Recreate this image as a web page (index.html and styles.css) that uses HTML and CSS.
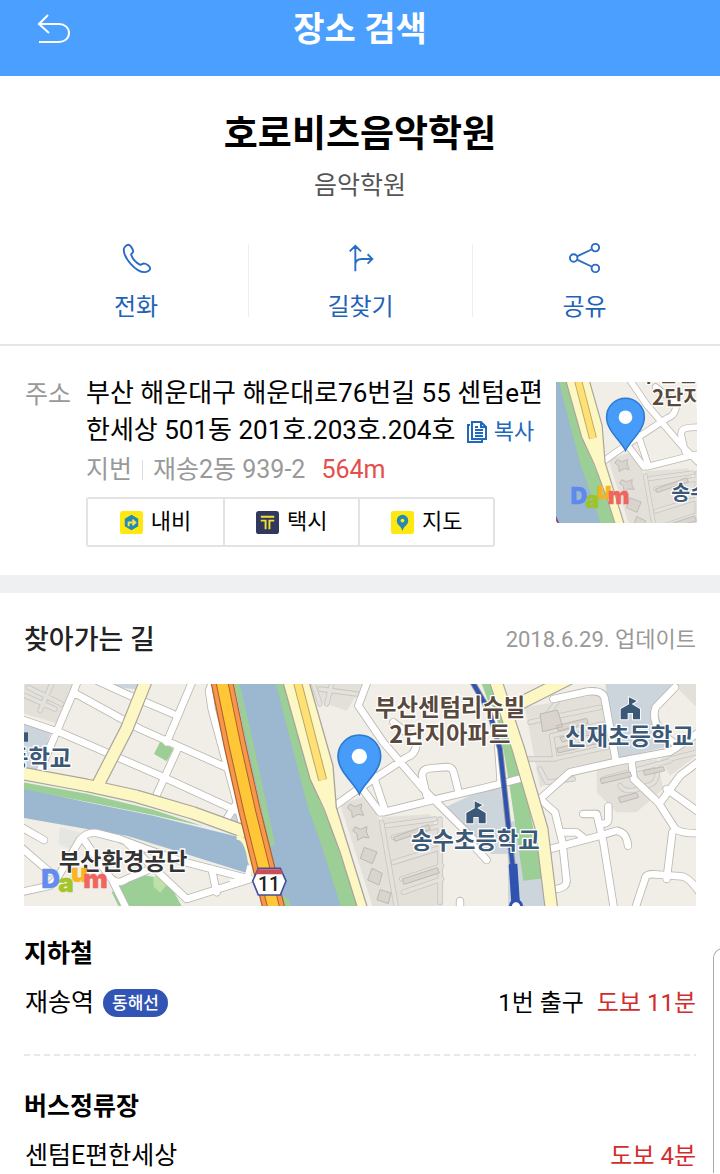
FILE: index.html
```html
<!DOCTYPE html>
<html lang="ko">
<head>
<meta charset="utf-8">
<meta name="viewport" content="width=device-width, initial-scale=1">
<title>장소 검색</title>
<link rel="stylesheet" href="styles.css">
</head>
<body>
<header class="topbar">
  <button class="back" type="button" aria-label="뒤로">
    <svg width="36" height="34" viewBox="0 0 36 34"><path d="M12 3 3 12l10 9M3 12h20c6 0 10 4 10 9s-4 9-10 9H3"/></svg>
  </button>
  <h1 class="topbar-title">장소 검색</h1>
</header>
<main>
  <section class="summary">
    <h2 class="place">호로비츠음악학원</h2>
    <p class="category">음악학원</p>
    <nav class="actions">
      <a class="action" href="#phone">
        <svg class="action-icon" viewBox="0 0 36 36"><path d="M5 9c0-2 3-5 5-5 2 0 5 5 5 7s-3 2-2 4c2 5 5 8 9 10 2 1 3-2 5-1 2 0 6 3 6 5s-3 4-6 4C18 33 5 18 5 9z"/></svg>
        <span>전화</span>
      </a>
      <a class="action" href="#route">
        <svg class="action-icon" viewBox="0 0 36 36"><path d="M12 32V5M6 11l6-6 6 6M12 25c0-4 3-6 7-6h11M25 14l5 5-5 5"/></svg>
        <span>길찾기</span>
      </a>
      <a class="action" href="#share">
        <svg class="action-icon" viewBox="0 0 36 36"><circle cx="6" cy="18" r="4"/><circle cx="29" cy="7" r="4"/><circle cx="29" cy="29" r="4"/><path d="M10 16 25 9M10 20l15 7"/></svg>
        <span>공유</span>
      </a>
    </nav>
  </section>

  <section class="address">
    <h3 class="address-label">주소</h3>
    <div class="address-body">
      <p class="road-name">부산 해운대구 해운대로76번길 55 센텀e편한세상 501동 201호.203호.204호
        <button class="copy" type="button"><svg width="22" height="24" viewBox="0 0 22 24"><path d="M6 2h9l5 5v12H6zM15 2v5h5M9 10h8M9 13h8M9 16h8M9 7h3M4 5H2v17h14v-2"/></svg>복사</button></p>
      <p class="lot"><span>지번</span><span class="bar"></span><span>재송2동 939-2</span><span class="distance">564m</span></p>
      <div class="apps">
        <a class="app" href="#navi"><svg class="app-icon" viewBox="0 0 24 24"><rect width="24" height="24" rx="3" fill="#ffe710"/><path d="M12 4l7 4v8l-7 4-7-4V8z" fill="#2589b5"/><path d="M9 16v-4h6M13 9l3 3-3 3" fill="none" stroke="#f3e54b" stroke-width="2"/></svg>내비</a>
        <a class="app" href="#taxi"><svg class="app-icon" viewBox="0 0 24 24"><rect width="24" height="24" rx="3" fill="#30385d"/><path d="M5 6h14M5 10h5v9M19 10h-5v9" fill="none" stroke="#f7df2e" stroke-width="2"/></svg>택시</a>
        <a class="app" href="#map"><svg class="app-icon" viewBox="0 0 24 24"><rect width="24" height="24" rx="3" fill="#ffe710"/><path d="M12 21c-1-5-6-6-6-11a6 6 0 0 1 12 0c0 5-5 6-6 11z" fill="#2589b5"/><circle cx="12" cy="10" r="2" fill="#ffe710"/></svg>지도</a>
      </div>
    </div>
    <a class="thumb" href="#map" aria-label="지도 보기">
      <svg viewBox="783 113 477 477">
        <use href="#city"/>
        <use href="#daum" x="768" y="-100"/>
      </svg>
    </a>
  </section>

  <section class="directions" id="map">
    <div class="directions-head">
      <h3 class="directions-title">찾아가는 길</h3>
      <span class="updated">2018.6.29. 업데이트</span>
    </div>
    <svg class="map" viewBox="12 15 2016 666" role="img" aria-label="찾아가는 길 지도">
      <defs>
        <g id="white-roads">
          <path d="M0 120 120 160 420 290 650 395M60 275 160 40 175 0M160 40 360 150 625 268M220 0 330 50 460 105M520 0 440 190M475 205 405 358M645 380l-28 45M0 502l90 78M0 442l72 41M0 640l90-20 20-20 70-118q20-24 50-20l70 18 80 30 100 35 210 55M190 480l70 100q25 45 60 20l60-25M320 490l180 170 190-60M575 570l15 70M280 610l40 80M575 15l-8 20 8 55 65 240 36 140"/>
          <path d="M1045 0l-30 80 75 110 120 140 150 150M945 380l70-50 145-95q30-10 30-50l-70-55M1020 320l60 80M1060 290l35 105M1220 350l-14-60q0-20 24-22l50-4q18 0 22 20l14 55M1090 400l140-35 170-40 105-27M1410 90l22 70 10 145M1350 488l50 55M1320 690v-24"/>
          <path d="M1600 60l100-22q48-6 54 20l34 190M1560 360l90-80 140-32 160-30 90-60M1965 25l-58 60q-20 60 60 110M1835 250l6 50 75 72 50 78q20 15 75 12M1925 365l55-75 60-45M1940 330l100 72M1957 460l-17 140M1845 690l30-90q0-16 30-14l80 6q25 2 65 65M1560 360l45 40 22 90 12 110q5 25-30 30M1590 510l150-40 50-15q30 5 34 45M1630 460h40l25 20M1690 405h40l20 85 32 200M1740 435q25 0 25-15v-38"/>
        </g>
        <g id="lanes">
          <path d="M15 50l90 40M25 25l100 50M95 15 60 95M880 15l20 60M935 15l-15 60M900 30l110 15M1085 430l45 260M1100 440l145-20M1120 475l140-35M1120 550l145-45M1145 600l120-40M1150 640l115-40M1260 420v250M1530 130l40-10 40-50M1525 240h80l-10-70 150-35M1600 240l180-40M1620 110l120-25M1560 270l20 40 80-10M1750 300l200-55M1800 320q20 30 80 0M1910 255q10 60-30 65M1950 240l80-20"/>
        </g>
        <g id="pin"><path d="M1018 345c-14-33-64-67-64-113a64 64 0 0 1 128 0c0 46-50 80-64 113z" fill="#469cf8" stroke="#2c7bd0" stroke-width="5"/><circle cx="1018" cy="232" r="23" fill="#fff"/></g>
        <g id="school"><path d="M-29 33V2L-4-12V-33L19-22 4-13 29 2V33H8V14H-8V33z" fill="#3b5876" stroke="#fff" stroke-width="5" paint-order="stroke"/></g>
        <g id="daum" class="daum">
          <text x="64" y="627" fill="#5b87ef" stroke="#5b87ef">D</text>
          <text x="115" y="639" fill="#9fc41c" stroke="#9fc41c">a</text>
          <text x="153" y="608" fill="#fbb216" stroke="#fbb216">u</text>
          <text x="190" y="627" fill="#f05f57" stroke="#f05f57">m</text>
        </g>
        <path id="avenue" d="M0 282l200 37 150 33 170 50 165 60M380 0l-60 150-85 165M1425 0l70 210 70 240 30 245M1470 88 1645 0"/>
        <path id="highway" d="M604 0l41 200 45 200 72 290"/>
        <g id="city">
          <rect x="0" y="0" width="2060" height="700" fill="#f1eee8"/>
          <g fill="#e3e0da">
            <path d="M0 0h165l-50 135L0 100zM890 0h150l-60 95-90-30zM960 375l80-25 50 90 45 250h-75zM1085 415l145-10 40 90v195h-145zM1515 85l225-40 50 200-140 40-90 40zM1730 270l180-30 20 90-80 70h-60l-60-60zM1920 240l110-80v70l-80 60zM1960 15h80v80z"/>
          </g>
          <g fill="#ccd4dc">
            <path d="M0 115l95 35-40 125H0zM245 0h120l-10 32-80-10zM1755 0h210l-60 90 50 110-175 40zM1275 385l75-35 90-25 35 200h-60l-70-40zM1462 430l55-10 48 180 10 90h-110zM610 430l40-40 25 60z"/>
          </g>
          <path d="M640 0h135l90 300 50 140 65 250H790L680 200z" fill="#9cb8d0"/>
          <path d="M0 325l200 45 200 40 280 70 30 90-20 15-240-75-130-40-120-20-200-35z" fill="#9cb8d0"/>
          <g fill="#9bcf96">
            <path d="M764 0h26l90 320 55 130 80 240h-50L905 500l-40-110zM640 0h15l40 170 70 325-15 10zM0 308l200 36 200 48 150 50-150-34-200-40-200-40zM790 650l20 15v25h-20z"/>
            <path d="M402 225l18-36 40 20-20 38zM275 640l75-55 90 15 50 90H300zM1380 0h40l70 200 80 398-60 7-40-275-20-120-30-100z"/>
          </g>
          <path d="M400 595l25-12 18 30-22 28-20-18z" fill="#bfe0a8"/>
          <path d="M120 445l60 15-30 50-35-15z" fill="#e5e6e2"/>
          <g class="road">
            <use href="#lanes" stroke="#c9c6c0" stroke-width="16"/><use href="#lanes" stroke="#e4e2dd" stroke-width="11"/>
            <use href="#white-roads" stroke="#bbb7b1" stroke-width="25"/><use href="#white-roads" stroke="#fff" stroke-width="20"/>
          </g>
          <g fill="#d9d5ce" stroke="#bdb9b2" stroke-width="3">
            <path id="block" d="M990 375l15 8 20-8-2 16 8 18-17-3-17 10-2-19-13-10z"/>
            <use href="#block" x="16" y="68"/>
            <path d="M1033 505l38 14-14 35-36-16zM1056 568l31 15-10 35-34-15zM1080 632l33 10-8 32-34-12zM1120 475l105-38 6 14-106 36zM1147 600l105-34 6 16-106 34zM1560 105l52-12 16 50-60 15zM1610 140l90-22 5 14-90 24zM1620 175l100-25 5 14-98 25zM1610 208l115-28 5 14-115 28zM1740 300l90-22 5 14-90 22zM1795 355l55-14 6 14-55 16zM1870 275l60-12 4 12-60 14z"/>
          </g>
          <g class="road">
            <use href="#avenue" stroke="#aaa69d" stroke-width="41"/>
            <use href="#avenue" stroke="#fdf7c3" stroke-width="34"/>
          </g>
          <path d="M786 0h79l74 260 10 125 96 310h-30l-55-175-48-130-42-90z" fill="#fdf7c3" stroke="#aaa69d" stroke-width="4"/>
          <path d="M830 0l78 303" fill="none" stroke="#b9a869" stroke-width="27"/>
          <path d="M830 0l78 303" fill="none" stroke="#fee074" stroke-width="21"/>
          <path d="M650 475q30 0 40 70l20 60" fill="none" stroke="#fdf7c3" stroke-width="14"/>
          <path d="M630 610l65-15M690 560l-12 50" fill="none" stroke="#fff" stroke-width="16"/>
          <g class="road">
            <use href="#highway" stroke="#a9622f" stroke-width="68"/>
            <use href="#highway" stroke="#f8964a" stroke-width="61"/>
            <use href="#highway" stroke="#a9622f" stroke-width="38"/>
            <use href="#highway" stroke="#ffc638" stroke-width="32"/>
          </g>
          <g fill="none" stroke="#3153b0">
            <path d="M1352 0l55 95 33 115 38 350" stroke="#8e9299" stroke-width="18"/>
            <path d="M1352 0l55 95 33 115 38 350" stroke-width="12"/>
            <path d="M1479 555l8 120" stroke-width="26"/>
            <circle cx="1488" cy="682" r="17" fill="#fff" stroke-width="9"/>
          </g>
          <use href="#school" x="1831" y="88"/><use href="#school" x="1368" y="400"/>
          <path d="M0 160h24v28H0z" fill="#3b5876"/>
          <g class="label">
            <text x="1065" y="112" fill="#59493c">부산센텀리슈빌</text>
            <text x="1108" y="191" fill="#59493c">2단지아파트</text>
            <text x="1635" y="198" fill="#3b5876">신재초등학교</text>
            <text x="1173" y="511" fill="#3b5876">송수초등학교</text>
            <text x="154" y="265" fill="#3b5876" text-anchor="end">초등학교</text>
            <text x="116" y="572" fill="#333">부산환경공단</text>
          </g>
          <path d="M715 568h66l17 38-17 42h-66l-17-42z" fill="#fff" stroke="#454f9e" stroke-width="5"/>
          <path d="M713 571h70l6 15h-82z" fill="#cc4d55"/>
          <text class="route" x="747" y="636">11</text>
          <use href="#pin"/>
        </g>
      </defs>
      <use href="#city"/><use href="#daum"/>
    </svg>

    <div class="stop">
      <h4 class="stop-type">지하철</h4>
      <div class="stop-row">
        <span class="stop-name">재송역</span><span class="line">동해선</span>
        <span class="stop-exit">1번 출구</span><span class="walk">도보 11분</span>
      </div>
    </div>
    <hr class="dash">
    <div class="stop">
      <h4 class="stop-type">버스정류장</h4>
      <div class="stop-row">
        <span class="stop-name">센텀E편한세상</span>
        <span class="walk walk-end">도보 4분</span>
      </div>
    </div>
  </section>
</main>
<div class="edge-panel"></div>
</body>
</html>
```
FILE: styles.css
```css
* { box-sizing: border-box; margin: 0; padding: 0; }
html { overflow-x: hidden; }
body {
  position: relative;
  background: #fff;
  color: #000;
  font-family: Roboto, "Noto Sans CJK KR", sans-serif;
  font-size: 25px;
  line-height: 36px;
}
a { color: inherit; text-decoration: none; }
button { border: 0; background: none; font: inherit; color: inherit; cursor: pointer; }
svg { display: block; }

.topbar {
  display: grid;
  grid-template-columns: 72px 1fr 72px;
  align-items: center;
  padding-bottom: 18px;
  background: #4a9fff;
  color: #fff;
}
.topbar-title { text-align: center; font-size: 34px; line-height: 58px; font-weight: 700; }
.back { justify-self: end; }
.back svg { fill: none; stroke: #fff; stroke-width: 2; }

.summary { padding: 34px 24px 27px; border-bottom: 2px solid #e6e6e6; text-align: center; }
.place { font-size: 37px; line-height: 50px; font-weight: 700; }
.category { margin-top: 8px; color: #555; }
.actions { display: grid; grid-template-columns: repeat(3, 1fr); margin-top: 40px; color: #1f63b8; }
.action {
  display: flex;
  flex-direction: column;
  align-items: center;
  gap: 17px;
  height: 73px;
  font-size: 24px;
  line-height: 30px;
}
.action + .action { border-left: 1px solid #eee; }
.action-icon { width: 34px; height: 34px; margin: -3px 0 -4px; flex: none; overflow: visible; fill: none; stroke: #2a6cc4; stroke-width: 2; }
.action span { padding-top: 4px; }

.address { display: flex; align-items: flex-start; padding: 29px 23px 28px 25px; border-bottom: 18px solid #eff0f2; }
.address-label { flex: 0 0 61px; color: #999; font-size: 25px; font-weight: 400; line-height: 40px; }
.address-body { flex: 1; min-width: 0; }
.road-name { font-size: 26px; line-height: 37px; word-break: break-all; }
.copy { display: inline-flex; align-items: center; gap: 6px; margin-left: 4px; color: #2167bb; font-size: 22px; line-height: 28px; vertical-align: middle; }
.copy svg { fill: none; stroke: #2167bb; stroke-width: 2; }
.lot { display: flex; align-items: center; margin-top: 2px; color: #999; line-height: 38px; }
.bar { width: 1px; height: 20px; margin: 0 10px; background: #ddd; }
.distance { margin-left: 16px; color: #e2504c; }
.apps { display: grid; grid-template-columns: repeat(3, 1fr); width: 89%; margin-top: 8px; border: 2px solid #e3e3e3; border-radius: 3px; }
.app { display: flex; align-items: center; justify-content: center; gap: 8px; font-size: 22px; line-height: 46px; }
.app + .app { border-left: 2px solid #e3e3e3; }
.app-icon { width: 23px; height: 23px; }
.thumb { flex: 0 0 141px; margin: 7px 0 0 10px; }
.thumb svg { width: 100%; }

.directions { padding: 26px 24px 0; }
.directions-head { display: flex; align-items: center; justify-content: space-between; line-height: 42px; }
.directions-title { font-size: 27px; font-weight: 500; color: #222; }
.updated { font-size: 22px; color: #999; }
.map { width: 100%; height: auto; margin-top: 23px; }
.road { fill: none; stroke-linecap: round; stroke-linejoin: round; }
.label text {
  font: 700 70px "Noto Sans CJK KR", sans-serif;
  stroke: #fff;
  stroke-width: 8px;
  stroke-linejoin: round;
  paint-order: stroke;
}
.route { font: 500 58px Roboto, sans-serif; fill: #222; text-anchor: middle; }
.daum { opacity: .95; }
.daum text { font: 900 78px Inter, sans-serif; stroke-width: 1px; }

.stop { padding: 30px 0 34px; }
.stop + .dash + .stop { padding: 33px 0 0; }
.stop-type { font-size: 25px; font-weight: 700; line-height: 36px; }
.stop-row { display: flex; align-items: center; margin-top: 14px; line-height: 34px; }
.stop-name { padding-left: 1px; }
.line { margin-left: 9px; padding: 0 9px; border-radius: 14px; background: #3254b4; color: #fff; font-size: 17px; line-height: 28px; font-weight: 500; }
.stop-exit { margin-left: auto; font-size: 24px; }
.walk { margin-left: 13px; color: #d32c2c; font-size: 24px; }
.walk-end { margin-left: auto; }
.dash { height: 2px; border: 0; background: repeating-linear-gradient(90deg, #e8e8e8 0 6px, transparent 6px 10px); }

.edge-panel {
  position: absolute;
  right: -20px;
  bottom: 0;
  width: 27px;
  height: 225px;
  border: 1px solid #aaa;
  border-bottom: 0;
  border-radius: 10px 0 0 0;
  background: #fff;
}
```
